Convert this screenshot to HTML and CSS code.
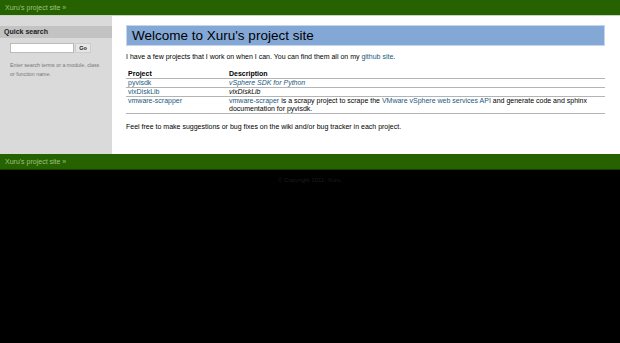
FILE: index.html
```html
<!DOCTYPE html>
<html>

<head>
    <meta charset="utf-8" />
    <title>Welcome to Xuru's project site</title>
    <link rel="stylesheet" href="styles.css">
</head>

<body>
    <div class="related top">
        <a href="#">Xuru's project site</a> &raquo;
    </div>

    <div class="document">
        <div class="sphinxsidebar">
            <h3>Quick search</h3>
            <form class="search">
                <input type="text" class="search-box" />
                <button type="button" class="search-go">Go</button>
            </form>
            <p class="search-help">Enter search terms or a module, class or function name.</p>
        </div>

        <div class="body">
            <h1>Welcome to Xuru's project site</h1>
            <p>I have a few projects that I work on when I can. You can find them all on my <a href="#">github site</a>.</p>
            <table class="projects">
                <tr>
                    <th class="col-name">Project</th>
                    <th>Description</th>
                </tr>
                <tr>
                    <td><a href="#">pyvisdk</a></td>
                    <td><a href="#"><em>vSphere SDK for Python</em></a></td>
                </tr>
                <tr>
                    <td><a href="#">vixDiskLib</a></td>
                    <td><em>vixDiskLib</em></td>
                </tr>
                <tr>
                    <td><a href="#">vmware-scrapper</a></td>
                    <td><a href="#">vmware-scraper</a> is a scrapy project to scrape the <a href="#">VMware vSphere web services API</a> and generate code and sphinx documentation for pyvisdk.</td>
                </tr>
            </table>
            <p>Feel free to make suggestions or bug fixes on the wiki and/or bug tracker in each project.</p>
        </div>
    </div>

    <div class="related bottom">
        <a href="#">Xuru's project site</a> &raquo;
    </div>

    <div class="footer">&copy; Copyright 2011, Xuru.</div>
</body>

</html>
```

FILE: styles.css
```css
html {
    background-color: #000;
}

body {
    margin: 0;
    font-family: "Liberation Sans", Arial, sans-serif;
    font-size: 7px;
    color: #000;
}

a {
    color: #1b5a80;
    text-decoration: none;
}

.related {
    background-color: #266200;
    color: #9fc27a;
    height: 15px;
    line-height: 15px;
    padding-left: 5px;
    font-size: 7px;
}

.related a {
    color: #9fc27a;
}

.related.top {
    border-bottom: 1px solid #c9d3c2;
}

.related.bottom {
    border-bottom: 1px solid #173c00;
}

.document {
    display: flex;
    height: 138px;
}

.sphinxsidebar {
    width: 112px;
    background-color: #dadada;
    padding-top: 10px;
}

.sphinxsidebar h3 {
    margin: 0;
    height: 12px;
    line-height: 12px;
    padding-left: 4px;
    background-color: #c3c3c3;
    font-size: 7px;
    color: #222;
}

.search {
    display: flex;
    margin: 5px 0 0 10px;
}

.search-box {
    width: 62px;
    height: 8px;
    padding: 0;
    border: 1px solid #bbb;
    background: #fff;
}

.search-go {
    margin-left: 1px;
    width: 16px;
    height: 10px;
    padding: 0;
    border: 1px solid #ccc;
    background: #e6e6e6;
    font-family: inherit;
    font-size: 5.5px;
    font-weight: bold;
    color: #222;
}

.search-help {
    width: 93px;
    margin: 8px 0 0 10px;
    font-size: 5.3px;
    line-height: 8.5px;
    color: #777;
}

.body {
    flex: 1;
    background-color: #fff;
    padding: 9px 15px 0 14px;
}

.body h1 {
    margin: 0;
    height: 19px;
    line-height: 19px;
    padding-left: 5px;
    background-color: #84a8d6;
    border: 1px solid #c6d6ea;
    font-size: 13.5px;
    font-weight: normal;
    color: #000;
}

.body p {
    margin: 7px 0 0 0;
    line-height: 8px;
}

.projects {
    width: 100%;
    margin-top: 9px;
    border-collapse: collapse;
}

.projects th,
.projects td {
    text-align: left;
    vertical-align: top;
    padding: 0 2px;
    line-height: 8px;
    border-bottom: 1px solid #b4b4b4;
}

.projects .col-name {
    width: 97px;
}

.projects + p {
    margin-top: 9px;
}

.footer {
    text-align: center;
    padding-top: 7px;
    font-size: 6px;
    color: #1c1c1c;
}
```
